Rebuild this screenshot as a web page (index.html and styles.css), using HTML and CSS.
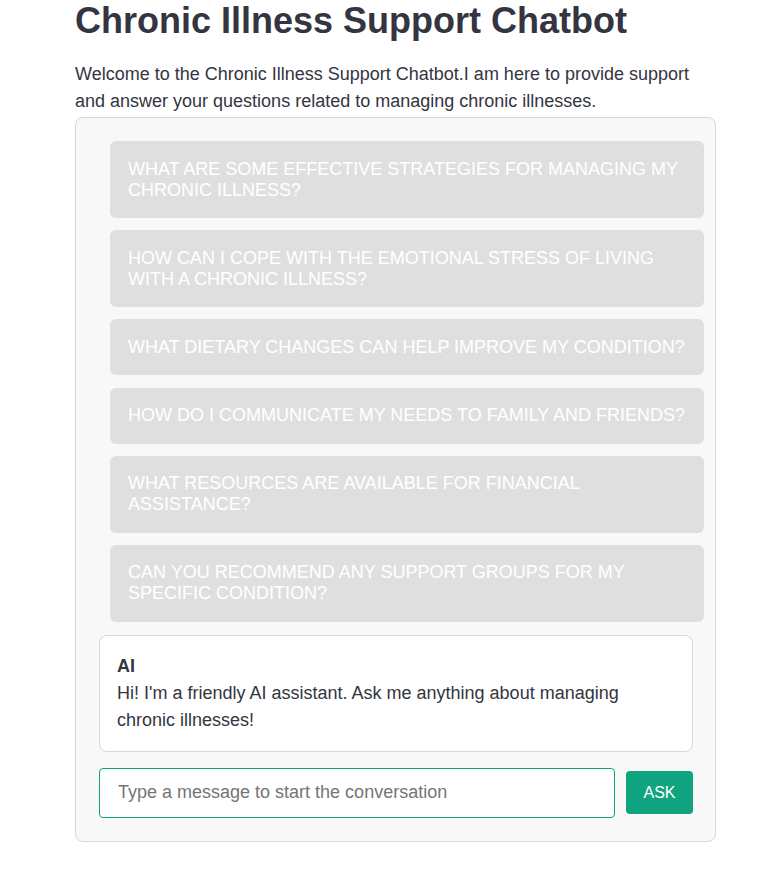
FILE: index.html
```html
<!DOCTYPE html>
<html lang="en">
<head>
<meta charset="utf-8">
<title>Chronic Illness Support Chatbot</title>
<link rel="stylesheet" href="styles.css">
</head>
<body>
<main class="page">
  <h1 class="title">Chronic Illness Support Chatbot</h1>
  <p class="intro">Welcome to the Chronic Illness Support Chatbot.I am here to provide support and answer your questions related to managing chronic illnesses.</p>
  <section class="chat">
    <div class="suggestions">
      <button class="suggestion">What are some effective strategies for managing my chronic illness?</button>
      <button class="suggestion">How can I cope with the emotional stress of living with a chronic illness?</button>
      <button class="suggestion">What dietary changes can help improve my condition?</button>
      <button class="suggestion">How do I communicate my needs to family and friends?</button>
      <button class="suggestion">What resources are available for financial assistance?</button>
      <button class="suggestion">Can you recommend any support groups for my specific condition?</button>
    </div>
    <div class="message">
      <div class="message-author">AI</div>
      <div class="message-text">Hi! I'm a friendly AI assistant. Ask me anything about managing chronic illnesses!</div>
    </div>
    <form class="composer">
      <input class="composer-input" type="text" placeholder="Type a message to start the conversation">
      <button class="composer-button" type="button">ASK</button>
    </form>
  </section>
</main>
</body>
</html>
```

FILE: styles.css
```css
html, body {
  margin: 0;
  padding: 0;
  background: #ffffff;
}
body {
  font-family: "Liberation Sans", Arial, sans-serif;
  color: #343541;
}
.page {
  width: 641px;
  margin-left: 75px;
}
.title {
  margin: 0 0 20px;
  font-size: 36px;
  line-height: 41px;
  font-weight: 700;
  color: #343541;
}
.intro {
  margin: 0 0 2px;
  font-size: 18px;
  line-height: 27px;
}
.chat {
  box-sizing: border-box;
  border: 1px solid #d6d6d6;
  border-radius: 8px;
  background: #f8f8f8;
  padding: 23px 22px 23px 23px;
  display: flex;
  flex-direction: column;
}
.suggestions {
  display: flex;
  flex-direction: column;
  gap: 12.2px;
  margin-left: 11px;
  margin-right: -11px;
}
.suggestion {
  display: block;
  width: 100%;
  text-align: left;
  font-family: inherit;
  font-size: 18px;
  line-height: 21px;
  text-transform: uppercase;
  color: #ffffff;
  background: #dfdfdf;
  border: none;
  border-radius: 6px;
  padding: 17.5px 12px 17.5px 18px;
  cursor: pointer;
}
.message {
  margin-top: 13px;
  background: #ffffff;
  border: 1px solid #d6d6d6;
  border-radius: 8px;
  padding: 17px 17px;
  font-size: 18px;
  line-height: 27px;
}
.message-author {
  font-weight: 700;
}
.composer {
  display: flex;
  align-items: center;
  gap: 11px;
  margin: 16px 0 0;
}
.composer-input {
  flex: 1;
  box-sizing: border-box;
  height: 50px;
  border: 1px solid #10a37f;
  border-radius: 4px;
  padding: 0 18px;
  font-family: inherit;
  font-size: 18px;
  color: #343541;
  background: #ffffff;
  outline: none;
}
.composer-input::placeholder {
  color: #757575;
}
.composer-button {
  box-sizing: border-box;
  width: 67px;
  height: 43px;
  border: none;
  border-radius: 4px;
  background: #10a37f;
  color: #ffffff;
  font-family: inherit;
  font-size: 16px;
  cursor: pointer;
}
```
